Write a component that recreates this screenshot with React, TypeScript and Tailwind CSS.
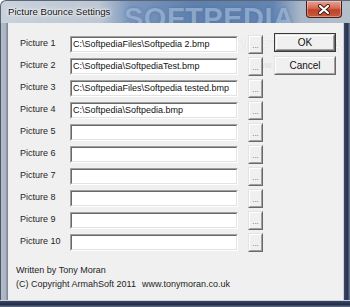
import React from 'react'

const paths = [
  'C:\\SoftpediaFiles\\Softpedia 2.bmp',
  'C:\\Softpedia\\SoftpediaTest.bmp',
  'C:\\SoftpediaFiles\\Softpedia tested.bmp',
  'C:\\Softpedia\\Softpedia.bmp',
  '',
  '',
  '',
  '',
  '',
  '',
]

const font = "font-['Liberation_Sans',Arial,sans-serif]"

function PathBox({ value }: { value: string }) {
  return (
    <div className="w-[168px] h-[17px] border border-t-[#a0a0a0] border-l-[#a0a0a0] border-r-white border-b-white">
      <div className="h-full border border-t-[#696969] border-l-[#696969] border-r-[#e3e3e3] border-b-[#e3e3e3] bg-white pl-[1px] text-[9px] leading-[13px] text-[#111] whitespace-nowrap overflow-hidden">
        {value}
      </div>
    </div>
  )
}

function RaisedButton({ label, w, h, isDefault, small }: { label: string; w: string; h: string; isDefault?: boolean; small?: boolean }) {
  const inner = (
    <div className="h-full border border-t-[#e3e3e3] border-l-[#e3e3e3] border-r-[#696969] border-b-[#696969]">
      <div
        className={
          'h-full border border-t-white border-l-white border-r-[#a0a0a0] border-b-[#a0a0a0] bg-[#f0f0f0] flex items-center justify-center ' +
          (small ? 'text-[8px] text-[#6a5a7a] leading-none pt-[3px]' : 'text-[10px] text-[#111]')
        }
      >
        {label}
      </div>
    </div>
  )
  return (
    <div className={w + ' ' + h + (isDefault ? ' border border-[#3a3a3a]' : '')}>{inner}</div>
  )
}

function CloseGlyph() {
  return (
    <svg width="14" height="11" viewBox="0 0 14 11">
      <path d="M3 2 L11 9 M11 2 L3 9" stroke="#3b1810" strokeWidth="4" strokeLinecap="round" />
      <path d="M3 2 L11 9 M11 2 L3 9" stroke="#ffffff" strokeWidth="2.2" strokeLinecap="round" />
    </svg>
  )
}

export default function App() {
  return (
    <div className={'w-[350px] h-[307px] flex flex-col overflow-hidden ' + font}>
      {/* Title bar */}
      <div className="relative h-[23px] flex items-start bg-[linear-gradient(to_right,#c9d2dc_0%,#bcc7d3_28%,#7d98bd_37%,#5f80ad_55%,#6384b1_78%,#a9b7c8_86%,#b4bfcc_100%)] border-t border-l border-[#5b6578] rounded-tl-[6px]">
        <div className="absolute left-[123px] top-[-4px] text-[29px] font-bold tracking-[0.5px] text-[#9bb3d4] opacity-75 [text-shadow:0_0_3px_#4d6d9c] select-none">
          SOFTPEDIA
        </div>
        <div className="relative pl-[7px] pt-[5px] text-[9.6px] leading-[12px] text-[#101010] [text-shadow:0_0_6px_#fff,0_0_3px_#fff,0_0_2px_#fff]">
          Picture Bounce Settings
        </div>
        <div className="relative ml-auto mr-[8px] w-[36px] h-[17px] rounded-b-[4px] border border-t-0 border-[#4a1d17] bg-[linear-gradient(to_bottom,#e7a494_0%,#d46a54_45%,#c0412b_55%,#c75a3d_100%)] shadow-[inset_0_0_0_1px_rgba(255,255,255,0.35)] flex items-center justify-center">
          <CloseGlyph />
        </div>
      </div>

      {/* Body with side frames */}
      <div className="flex flex-1">
        <div className="w-[8px] bg-[linear-gradient(to_right,#4e5666_0,#4e5666_1px,#b3bcc8_1px,#aab4c1_6px,#7c8799_7px,#7c8799_8px)]" />
        <div className="w-[335px] bg-[#f0f0f0] flex flex-col relative">
          {/* faint watermark over the client area */}
          <div className="absolute left-[225px] top-[9px] text-[19px] font-['Liberation_Serif',serif] tracking-[1px] text-[#f7f7f7] [text-shadow:0_0_1px_#c8c8c8] select-none">
            SOFTPEDIA
          </div>
          <div className="absolute left-[244px] top-[36px] text-[9px] text-[#dcdcdc] select-none">
            www.softpedia.com
          </div>

          <div className="relative flex pt-[10px]">
            <div className="flex flex-col pl-[12px]">
              {paths.map((p, i) => (
                <div key={i} className="flex items-center h-[22px]">
                  <div className="w-[50px] text-[9px] text-[#1e1e1e]">Picture {i + 1}</div>
                  <PathBox value={p} />
                  <div className="ml-[10px]">
                    <RaisedButton label="..." w="w-[15px]" h="h-[19px]" small />
                  </div>
                </div>
              ))}
            </div>
            <div className="flex flex-col ml-[11px] gap-[4px]">
              <RaisedButton label="OK" w="w-[62px]" h="h-[19px]" isDefault />
              <RaisedButton label="Cancel" w="w-[62px]" h="h-[19px]" />
            </div>
          </div>

          <div className="relative pl-[8px] mt-[10px] text-[9px] leading-[14px] text-[#1e1e1e]">
            <div>Written by Tony Moran</div>
            <div className="flex">
              <span className="w-[126px]">(C) Copyright ArmahSoft 2011</span>
              <span>www.tonymoran.co.uk</span>
            </div>
          </div>
        </div>
        <div className="w-[7px] bg-[linear-gradient(to_right,#c9d1dc_0,#c9d1dc_1px,#3a4762_1px,#25314d_5px,#66728a_6px,#66728a_7px)]" />
      </div>
      <div className="h-[7px] bg-[linear-gradient(to_bottom,#c9d1dc_0,#c9d1dc_1px,#3a4762_1px,#1f2a45_5px,#5c6882_6px,#5c6882_7px)]" />
    </div>
  )
}
